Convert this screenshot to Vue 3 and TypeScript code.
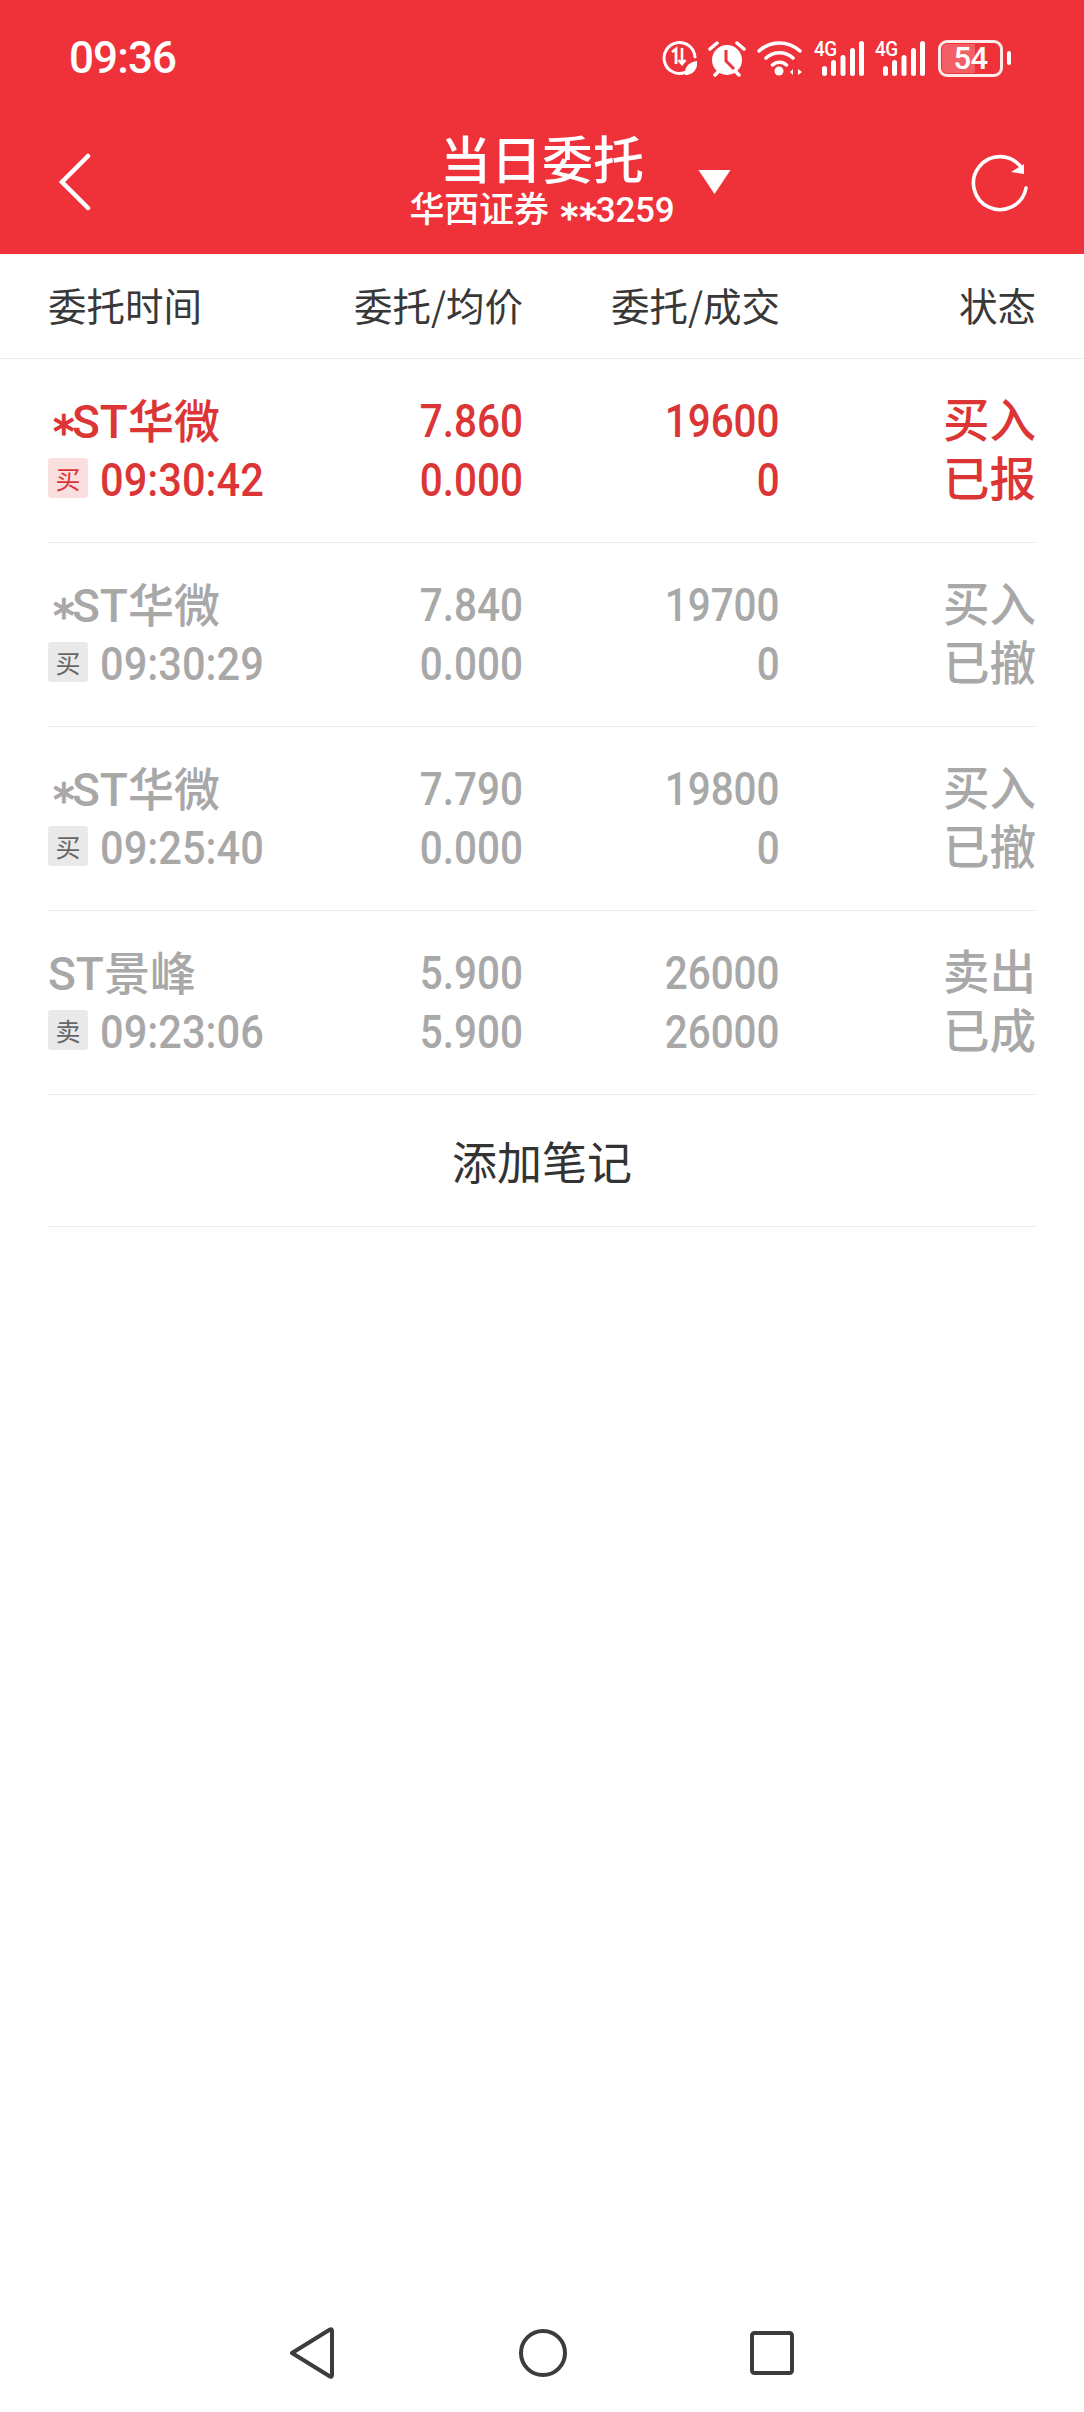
<script setup lang="ts">
interface OrderRow {
  star: boolean
  name: string
  side: string
  time: string
  price: string
  avg: string
  qty: string
  filled: string
  action: string
  state: string
  active: boolean
}

const rows: OrderRow[] = [
  { star: true, name: 'ST华微', side: '买', time: '09:30:42', price: '7.860', avg: '0.000', qty: '19600', filled: '0', action: '买入', state: '已报', active: true },
  { star: true, name: 'ST华微', side: '买', time: '09:30:29', price: '7.840', avg: '0.000', qty: '19700', filled: '0', action: '买入', state: '已撤', active: false },
  { star: true, name: 'ST华微', side: '买', time: '09:25:40', price: '7.790', avg: '0.000', qty: '19800', filled: '0', action: '买入', state: '已撤', active: false },
  { star: false, name: 'ST景峰', side: '卖', time: '09:23:06', price: '5.900', avg: '5.900', qty: '26000', filled: '26000', action: '卖出', state: '已成', active: false }
]
</script>

<template>
  <div class="page">
    <header class="top">
      <div class="status">
        <span class="clock">09:36</span>
        <div class="status-icons">
          <svg width="35" height="36" viewBox="0 0 35 36" class="ic">
            <path d="M23 32.500A15.500 15.500 0 1 1 33 17" fill="none" stroke="#fff" stroke-width="3" stroke-linecap="round" />
            <path d="M10 12l4-3v15" fill="none" stroke="#fff" stroke-width="2.800" />
            <path d="M20 8v16m-3.500-4l3.500 4 3.500-4" fill="none" stroke="#fff" stroke-width="2.600" />
            <path d="M23 35c-1-8 4-13 12-14 1 8-4 14-12 14z" fill="#fff" />
          </svg>
          <svg width="38" height="37" viewBox="0 0 38 37" class="ic">
            <circle cx="19" cy="20" r="15" fill="#fff" />
            <path d="M18 10v11l8 8" fill="none" stroke="#ef323a" stroke-width="3" />
            <path d="M2 9l7-6M36 9l-7-6M7 35l4-4M31 35l-4-4" stroke="#fff" stroke-width="3.500" stroke-linecap="round" />
          </svg>
          <svg width="46" height="36" viewBox="0 0 46 36" class="ic">
            <path d="M2 11a30 30 0 0 1 41 0M9 18a20 20 0 0 1 27 0M15.500 25a10 10 0 0 1 14 0" fill="none" stroke="#fff" stroke-width="3.500" stroke-linecap="round" />
            <circle cx="22" cy="31" r="4.500" fill="#fff" />
            <path d="M33 32l3-3v6zM39 28v8M41 29l4 3-4 3z" fill="#fff" />
          </svg>
          <div v-for="n in 2" :key="n" class="signal">
            <span class="net">4G</span>
            <svg width="50" height="36" viewBox="0 0 50 36" class="ic">
              <rect x="8" y="26" width="5" height="10" rx="2.500" fill="#fff" />
              <rect x="17" y="20" width="5" height="16" rx="2.500" fill="#fff" />
              <rect x="26.500" y="15" width="5" height="21" rx="2.500" fill="#fff" />
              <rect x="36" y="8" width="5" height="28" rx="2.500" fill="#fff" />
              <rect x="45" y="1" width="5" height="35" rx="2.500" fill="#fff" />
            </svg>
          </div>
          <div class="battery">
            <span class="battery-fill"></span>
            <span class="battery-text">54</span>
            <span class="battery-nub"></span>
          </div>
        </div>
      </div>
      <div class="nav">
        <svg class="back" width="36" height="58" viewBox="0 0 36 58">
          <path d="M31 3L5 29l26 26" fill="none" stroke="#fff" stroke-width="4.500" stroke-linecap="round" />
        </svg>
        <div class="title-wrap">
          <div class="title">当日委托</div>
          <div class="subtitle">华西证券<span class="mask first">∗</span><span class="mask">∗</span>3259</div>
          <span class="drop"></span>
        </div>
        <svg class="refresh" width="62" height="62" viewBox="0 0 62 62">
          <path d="M52 14A26.500 26.500 0 1 0 57 35" fill="none" stroke="#fff" stroke-width="3.600" stroke-linecap="round" />
          <path d="M42 19l13-8v10z" fill="#fff" />
        </svg>
      </div>
    </header>

    <div class="thead grid-row">
      <span class="cell-l">委托时间</span>
      <span class="cell-r">委托/均价</span>
      <span class="cell-r">委托/成交</span>
      <span class="cell-r">状态</span>
    </div>

    <div class="list">
      <div v-for="row in rows" :key="row.time" class="row grid-row" :class="{ active: row.active }">
        <div class="cell">
          <div class="line name"><span v-if="row.star" class="star">∗</span>{{ row.name }}</div>
          <div class="line time-line">
            <span class="badge">{{ row.side }}</span>
            <span class="num num-left">{{ row.time }}</span>
          </div>
        </div>
        <div class="cell cell-r">
          <div class="line"><span class="num">{{ row.price }}</span></div>
          <div class="line"><span class="num">{{ row.avg }}</span></div>
        </div>
        <div class="cell cell-r">
          <div class="line"><span class="num">{{ row.qty }}</span></div>
          <div class="line"><span class="num">{{ row.filled }}</span></div>
        </div>
        <div class="cell cell-r">
          <div class="line status-text">{{ row.action }}</div>
          <div class="line status-text">{{ row.state }}</div>
        </div>
      </div>
      <div class="note">添加笔记</div>
    </div>

    <footer class="sysnav">
      <svg width="48" height="52" viewBox="0 0 48 52">
        <path d="M4 26L42 2.500c1.200-.6 2 0 2 1.500v44c0 1.500-.8 2.100-2 1.500z" fill="none" stroke="#3c3c3c" stroke-width="4" stroke-linejoin="round" />
      </svg>
      <svg width="48" height="48" viewBox="0 0 48 48">
        <circle cx="24" cy="24" r="22" fill="none" stroke="#3c3c3c" stroke-width="4" />
      </svg>
      <svg width="44" height="44" viewBox="0 0 44 44">
        <rect x="2" y="2" width="40" height="40" rx="2.500" fill="none" stroke="#3c3c3c" stroke-width="4" />
      </svg>
    </footer>
  </div>
</template>

<style scoped>
.page {
  width: 1084px;
  height: 2412px;
  display: flex;
  flex-direction: column;
  background: #fff;
  overflow: hidden;
  font-family: "Noto Sans CJK SC", "Noto Sans", sans-serif;
}
.top {
  height: 254px;
  background: #ef323a;
  color: #fff;
  flex: none;
}
.status {
  height: 114px;
  display: flex;
  align-items: center;
  justify-content: space-between;
  padding: 2px 75px 0 69px;
  box-sizing: border-box;
}
.clock {
  font-family: Roboto, sans-serif;
  font-size: 44px;
  font-weight: 500;
  letter-spacing: -0.9px;
}
.status-icons {
  display: flex;
  align-items: center;
  gap: 11px;
}
.ic {
  display: block;
}
.signal {
  position: relative;
  width: 50px;
  height: 36px;
}
.net {
  position: absolute;
  left: 0;
  top: 0;
  font-family: Roboto, sans-serif;
  font-size: 21px;
  line-height: 18px;
  font-weight: 500;
  letter-spacing: -0.6px;
  transform: scaleX(0.9);
  transform-origin: left center;
}
.battery {
  position: relative;
  box-sizing: border-box;
  width: 65px;
  height: 37px;
  border: 3px solid rgba(255, 255, 255, 0.9);
  border-radius: 9px;
  margin-left: 2px;
  margin-right: 6px;
  display: flex;
  align-items: center;
  justify-content: center;
}
.battery-fill {
  position: absolute;
  left: 1px;
  top: 1px;
  bottom: 1px;
  width: 33px;
  border-radius: 5px 0 0 5px;
  background: rgba(255, 255, 255, 0.22);
}
.battery-text {
  position: relative;
  font-family: Roboto, sans-serif;
  font-size: 31px;
  font-weight: 500;
  line-height: 1;
  letter-spacing: -0.5px;
}
.battery-nub {
  position: absolute;
  right: -11px;
  top: 8px;
  width: 4px;
  height: 14px;
  border-radius: 2px;
  background: #fff;
}
.nav {
  position: relative;
  height: 140px;
  display: flex;
  align-items: flex-start;
  justify-content: space-between;
  padding: 39px 53px 0 57px;
}
.title-wrap {
  position: absolute;
  left: 50%;
  top: 13px;
  transform: translateX(-50%);
  text-align: center;
  white-space: nowrap;
}
.title {
  font-size: 51px;
  line-height: 60px;
  font-weight: 500;
}
.subtitle {
  font-size: 35px;
  line-height: 48px;
  font-weight: 500;
  font-family: Roboto, "Noto Sans CJK SC", sans-serif;
  letter-spacing: -0.2px;
}
.mask {
  display: inline-block;
  width: 19px;
  font-size: 27px;
  text-align: center;
  font-weight: 700;
  vertical-align: 2px;
}
.mask.first {
  margin-left: 9px;
}
.drop {
  position: absolute;
  left: 289px;
  top: 43px;
  width: 0;
  height: 0;
  border-left: 16px solid transparent;
  border-right: 16px solid transparent;
  border-top: 24px solid #fff;
}
.grid-row {
  display: grid;
  grid-template-columns: 300px 175px 257px 256px;
  margin: 0 48px;
}
.thead {
  height: 100px;
  margin: 0;
  padding: 0 48px 4px;
  align-items: center;
  font-size: 38.5px;
  color: #383838;
  border-bottom: 1px solid #ececec;
  flex: none;
}
.cell-l {
  text-align: left;
}
.cell-r {
  text-align: right;
}
.list {
  display: flex;
  flex-direction: column;
}
.row {
  height: 184px;
  box-sizing: border-box;
  align-items: center;
  align-content: center;
  color: #a8a8a8;
  border-bottom: 1px solid #eee;
}
.row.active {
  color: #dc3535;
}
.line {
  height: 59px;
  line-height: 58px;
  white-space: nowrap;
}
.name {
  font-family: Roboto, "Noto Sans CJK SC", sans-serif;
  font-size: 46px;
  font-weight: 500;
  line-height: 61px;
}
.star {
  display: inline-block;
  width: 24px;
  padding-left: 2px;
  box-sizing: border-box;
  font-size: 33px;
  font-weight: 700;
  text-align: center;
  vertical-align: 3px;
}
.time-line {
  display: flex;
  align-items: center;
  gap: 12px;
}
.badge {
  width: 40px;
  height: 40px;
  margin-top: -4px;
  border-radius: 3px;
  display: flex;
  align-items: center;
  justify-content: center;
  font-size: 25px;
  line-height: 1;
  background: #e9e9e9;
  color: #666;
}
.active .badge {
  background: #fbdfdf;
  color: #dc3535;
}
.num {
  display: inline-block;
  font-family: Roboto, sans-serif;
  font-size: 47px;
  font-weight: 500;
  transform: scaleX(0.86);
  transform-origin: right center;
}
.num-left {
  transform: scaleX(0.885);
  transform-origin: left center;
}
.status-text {
  font-size: 46.5px;
  font-weight: 500;
  line-height: 50px;
}
.note {
  height: 132px;
  box-sizing: border-box;
  margin: 0 48px;
  display: flex;
  align-items: center;
  justify-content: center;
  font-size: 45px;
  color: #333;
  border-bottom: 1px solid #eee;
}
.sysnav {
  margin-top: auto;
  height: 118px;
  display: flex;
  align-items: center;
  justify-content: center;
  gap: 183px;
  padding-right: 3px;
  flex: none;
}
</style>
